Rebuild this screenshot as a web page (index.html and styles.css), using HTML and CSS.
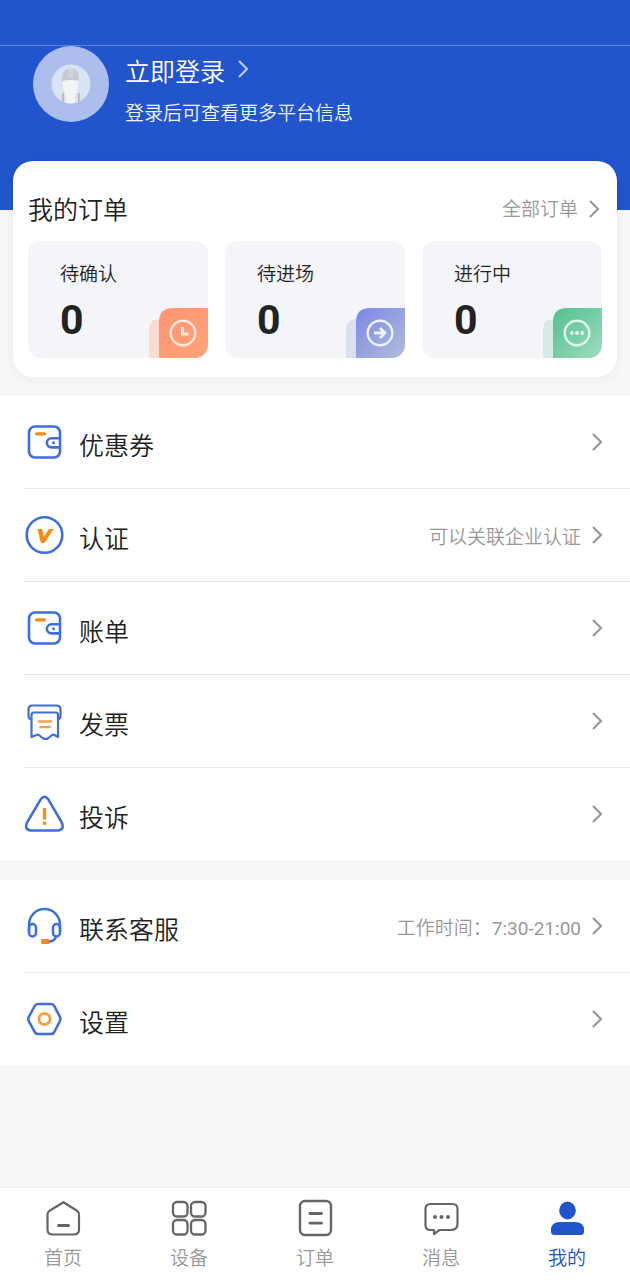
FILE: index.html
```html
<!DOCTYPE html>
<html lang="zh-CN">
<head>
<meta charset="utf-8">
<meta name="viewport" content="width=device-width, initial-scale=1">
<title>我的</title>
<link rel="stylesheet" href="styles.css">
</head>
<body>
<svg class="sprite" aria-hidden="true">
  <symbol id="chevron" viewBox="0 0 12 20"><path d="M2 2l8 8-8 8" fill="none" stroke="currentColor" stroke-width="2.2"/></symbol>
  <symbol id="wallet" viewBox="0 0 40 40">
    <g fill="none" stroke="#3f6fdc" stroke-width="2.6"><rect x="5" y="4.500" width="31" height="31" rx="6"/><path d="M36 16.200h-8.500a4.600 4.600 0 0 0 0 9.200H36"/></g>
    <circle cx="29.500" cy="20.800" r="1.500" fill="#3f6fdc"/><path d="M12.500 11.800h8" stroke="#f98a1c" stroke-width="3.200" stroke-linecap="round"/>
  </symbol>
</svg>
<header class="header">
  <div class="status"></div>
  <div class="profile">
    <svg class="avatar" viewBox="0 0 76 76" role="img" aria-label="头像">
      <defs><clipPath id="face"><circle cx="38" cy="38" r="19.500"/></clipPath></defs>
      <circle cx="38" cy="38" r="38" fill="#adbeec"/><circle cx="38" cy="38" r="19.500" fill="#d9e2f7"/>
      <g clip-path="url(#face)">
        <path d="M26 60V51q1-4 7-5h9q6 1 7 5v9z" fill="#e0e2e6"/>
        <path d="M33 45h9v15h-9z" fill="#f4f4f4"/>
        <path d="M30 47v13M46 47v13" stroke="#b9bec6" stroke-width="2"/>
        <path d="M30 34h15v7q-1 9-7.500 9T30 41z" fill="#f3f4f7"/>
        <path d="M29 35v-3q0-9.500 8.500-9.500T46 32v3q-8-2-17 0z" fill="#c5cad2"/>
        <path d="M35.500 22.500h4V31h-4z" fill="#d3d6dc"/>
      </g>
    </svg>
    <div class="intro">
      <a class="login" href="#login">立即登录<svg class="chevron"><use href="#chevron"/></svg></a>
      <p class="hint">登录后可查看更多平台信息</p>
    </div>
  </div>
</header>
<main class="main">
  <section class="orders">
    <div class="orders-head">
      <h2 class="orders-title">我的订单</h2>
      <a class="all" href="#orders">全部订单<svg class="chevron"><use href="#chevron"/></svg></a>
    </div>
    <div class="tiles">
      <a class="tile" href="#confirm"><span>待确认</span><strong class="count">0</strong>
        <svg class="corner" viewBox="0 0 60 50"><defs><linearGradient id="orange" x2="1" y2="1"><stop stop-color="#ff9474"/><stop offset="1" stop-color="#ffa477"/></linearGradient></defs>
          <path d="M1 50V22q0-11 11-11v39z" fill="#fbdcd4"/><path d="M11 50V14Q11 0 25 0h35v50z" fill="url(#orange)"/>
          <g fill="none" stroke="#ffe7dc"><circle cx="35" cy="25" r="12.300" stroke-width="2.400"/><path d="M34.500 19v7h6" stroke-width="3"/></g></svg></a>
      <a class="tile" href="#enter"><span>待进场</span><strong class="count">0</strong>
        <svg class="corner" viewBox="0 0 60 50"><defs><linearGradient id="violet" x2="1" y2="1"><stop stop-color="#7b87e4"/><stop offset="1" stop-color="#b3bcdc"/></linearGradient></defs>
          <path d="M1 50V22q0-11 11-11v39z" fill="#dbe0ee"/><path d="M11 50V14Q11 0 25 0h35v50z" fill="url(#violet)"/>
          <g fill="none" stroke="#eef1ff"><circle cx="35" cy="25" r="12.300" stroke-width="2.400"/><path d="M29 25h11m-5-5 5 5-5 5" stroke-width="2.800"/></g></svg></a>
      <a class="tile" href="#active"><span>进行中</span><strong class="count">0</strong>
        <svg class="corner" viewBox="0 0 60 50"><defs><linearGradient id="green" x2="1" y2="1"><stop stop-color="#52c08f"/><stop offset="1" stop-color="#9edcbd"/></linearGradient></defs>
          <path d="M1 50V22q0-11 11-11v39z" fill="#d7ebe6"/><path d="M11 50V14Q11 0 25 0h35v50z" fill="url(#green)"/>
          <circle cx="35" cy="25" r="12.300" fill="none" stroke="#dcf8eb" stroke-width="2.400"/><g fill="#e5fbf0"><circle cx="29.800" cy="25" r="2"/><circle cx="35" cy="25" r="2"/><circle cx="40.200" cy="25" r="2"/></g></svg></a>
    </div>
  </section>

  <nav class="list" aria-label="账户">
    <a class="row" href="#coupons"><svg class="icon"><use href="#wallet"/></svg><span class="label">优惠券</span><svg class="chevron"><use href="#chevron"/></svg></a>
    <a class="row" href="#verify"><svg class="icon" viewBox="0 0 40 40"><circle cx="20.500" cy="20" r="17.800" fill="none" stroke="#3f6fdc" stroke-width="2.600"/><path d="M13.500 14h4.800l1.500 8 5-8h4.800l-8 12.500q-1 1.700-2.800 1.700t-2.300-1.700z" fill="#f98a1c"/></svg><span class="label">认证</span><span class="note">可以关联企业认证</span><svg class="chevron"><use href="#chevron"/></svg></a>
    <a class="row" href="#bills"><svg class="icon"><use href="#wallet"/></svg><span class="label">账单</span><svg class="chevron"><use href="#chevron"/></svg></a>
    <a class="row" href="#invoice"><svg class="icon" viewBox="0 0 40 40"><g fill="none" stroke="#3f6fdc" stroke-width="2.200" stroke-linejoin="round"><path d="M8 18.500c-2 0-3.500-1.500-3.500-4V8.500q0-4 4-4h24q4 0 4 4v6c0 2.500-1.500 4-3.500 4"/><path d="M7.500 36V14q0-2.500 2.500-2.500h21.500q2.500 0 2.500 2.500v22l-3.500-2q-1.500-.8-3 .5l-3 2.500q-3 2-6 0l-3-2.500q-1.500-1.300-3-.5z"/></g><path d="M15 20.500h12M16.500 26h9" stroke="#f9a04b" stroke-width="2.600" stroke-linecap="round"/></svg><span class="label">发票</span><svg class="chevron"><use href="#chevron"/></svg></a>
    <a class="row" href="#complain"><svg class="icon" viewBox="0 0 40 40"><path d="M16.800 5.200q3.700-5 7.400 0l13.600 23.500q3 7-4 7.800H7q-7-.8-4-7.800z" fill="none" stroke="#3f6fdc" stroke-width="2.600"/><path d="M20.500 14v11.500M20.500 27.800v3" stroke="#f98a1c" stroke-width="3.400"/></svg><span class="label">投诉</span><svg class="chevron"><use href="#chevron"/></svg></a>
  </nav>

  <nav class="list" aria-label="服务">
    <a class="row" href="#service"><svg class="icon" viewBox="0 0 40 40"><g fill="none" stroke="#3f6fdc" stroke-width="2.500"><path d="M5 26V18.500a15.500 15.500 0 0 1 31 0V26M32 30.500q-1 5-8 5"/><rect x="5" y="18" width="7" height="12.500" rx="3.500"/><rect x="29" y="18" width="7" height="12.500" rx="3.500"/></g><rect x="17" y="33" width="8.500" height="5" rx="1" fill="#f98a1c"/></svg><span class="label">联系客服</span><span class="note">工作时间：<span class="hours">7:30-21:00</span></span><svg class="chevron"><use href="#chevron"/></svg></a>
    <a class="row" href="#settings"><svg class="icon" viewBox="0 0 40 40"><path d="M14 5h13q2.200 0 3.300 2l5.400 10.500q1.300 2.500 0 5L30.300 33q-1.100 2-3.300 2H14q-2.200 0-3.300-2L5 22.500q-1.300-2.500 0-5L10.700 7Q11.800 5 14 5z" fill="none" stroke="#3f6fdc" stroke-width="2.600"/><circle cx="20.500" cy="20" r="5.500" fill="none" stroke="#f9a03c" stroke-width="2.800"/></svg><span class="label">设置</span><svg class="chevron"><use href="#chevron"/></svg></a>
  </nav>
</main>
<nav class="tabs" aria-label="主导航">
  <a class="tab" href="#home"><svg class="tab-icon" viewBox="0 0 40 40"><path d="M20.500 4.200 34 12.800q2 1.300 2 3.500V31.500q0 5-5 5H9.500q-5 0-5-5V16.300q0-2.200 2-3.500z" fill="none" stroke="#666" stroke-width="2.200" stroke-linejoin="round"/><path d="M15.500 27.500h10" stroke="#666" stroke-width="3" stroke-linecap="round"/></svg>首页</a>
  <a class="tab" href="#devices"><svg class="tab-icon" viewBox="0 0 40 40"><g fill="none" stroke="#666" stroke-width="2.300"><rect x="4" y="4" width="14.500" height="14.500" rx="4"/><rect x="22" y="4" width="14.500" height="14.500" rx="4"/><rect x="4" y="22" width="14.500" height="14.500" rx="4"/><rect x="22" y="22" width="14.500" height="14.500" rx="4"/></g></svg>设备</a>
  <a class="tab" href="#order"><svg class="tab-icon" viewBox="0 0 40 40"><rect x="5" y="3" width="31" height="34" rx="5" fill="none" stroke="#666" stroke-width="2.400"/><path d="M15 15.500h11.500M15 25.200h11.500" stroke="#666" stroke-width="2.800" stroke-linecap="round"/></svg>订单</a>
  <a class="tab" href="#messages"><svg class="tab-icon" viewBox="0 0 40 40"><path d="M9.500 6h22q5 0 5 5v15q0 6-7 6H18.500L13 36v-4H9.500q-5 0-5-5V11q0-5 5-5z" fill="none" stroke="#666" stroke-width="2.200" stroke-linejoin="round"/><g fill="#666"><circle cx="14" cy="19" r="2"/><circle cx="20.500" cy="19" r="2"/><circle cx="27" cy="19" r="2"/></g></svg>消息</a>
  <a class="tab tab-active" href="#me" aria-current="page"><svg class="tab-icon" viewBox="0 0 40 40"><g fill="currentColor"><ellipse cx="20.500" cy="12.500" rx="8.300" ry="9"/><path d="M13 24h15q9 0 9 8v1.500q0 3.500-3.500 3.500h-26Q4 37 4 33.500V32q0-8 9-8z"/></g></svg>我的</a>
</nav>
</body>
</html>
```
FILE: styles.css
```css
* { box-sizing: border-box; }
body {
  margin: 0;
  min-height: 100vh;
  display: flex;
  flex-direction: column;
  background: #f7f7f7;
  color: #222;
  font-family: Roboto, "Noto Sans CJK SC", sans-serif;
  font-size: 19px;
  font-weight: 350;
  line-height: 28px;
}
a { color: inherit; text-decoration: none; }
.sprite { position: absolute; width: 0; height: 0; }
.chevron { flex: none; width: 12px; height: 20px; color: #999; }

.header { background: #2254cb; color: #fff; padding-bottom: 82px; }
.status { height: 46px; border-bottom: 1px solid #5f83db; }
.profile { display: flex; gap: 16px; padding: 0 33px; }
.avatar { flex: none; width: 76px; height: 76px; }
.intro { padding-top: 9px; }
.login { display: flex; align-items: center; gap: 12px; font-size: 25px; line-height: 36px; }
.login .chevron { color: #b9c8f0; margin-bottom: 8px; }
.hint { margin: 9px 0 0; line-height: 28px; color: #f0f4ff; }

.main { flex: 1; }
.orders {
  margin: -49px 13px 19px;
  padding: 32px 15px 19px;
  border-radius: 20px;
  background: #fff;
  box-shadow: 0 2px 12px rgba(0, 0, 0, 0.05);
}
.orders-head { display: flex; justify-content: space-between; align-items: center; padding: 0 2px 12px 0; }
.orders-title { margin: 0; font-size: 25px; font-weight: 350; line-height: 36px; }
.all { display: flex; align-items: center; gap: 10px; padding-bottom: 2px; color: #999; }
.all .chevron { margin-bottom: 2px; }
.tiles { display: grid; grid-template-columns: repeat(3, 1fr); gap: 17px; }
.tile {
  position: relative;
  display: flex;
  flex-direction: column;
  gap: 8px;
  padding: 20px 32px 14px;
  border-radius: 13px;
  background: #f3f5f9;
  overflow: hidden;
}
.count { font-size: 41px; font-weight: 700; line-height: 47px; }
.corner { position: absolute; right: 0; bottom: 0; width: 60px; height: 50px; }

.list { margin-bottom: 20px; padding-left: 24px; background: #fff; }
.row { display: flex; align-items: center; height: 93px; padding-right: 27px; border-bottom: 1px solid #e8e8e8; }
.row:last-child { height: 92px; border-bottom: 0; }
.icon { flex: none; width: 40px; height: 40px; margin-right: 15px; }
.label { flex: 1; padding-top: 10px; font-size: 25px; line-height: 36px; }
.note { padding: 6px 10px 0 0; color: #999; }
.hours { font-weight: 400; }

.tabs { display: flex; padding: 10px 0 7px; background: #fff; border-top: 1px solid #eee; }
.tab { flex: 1; display: flex; flex-direction: column; align-items: center; gap: 7px; color: #999; }
.tab-icon { width: 40px; height: 40px; }
.tab-active { color: #2254cb; }
```
